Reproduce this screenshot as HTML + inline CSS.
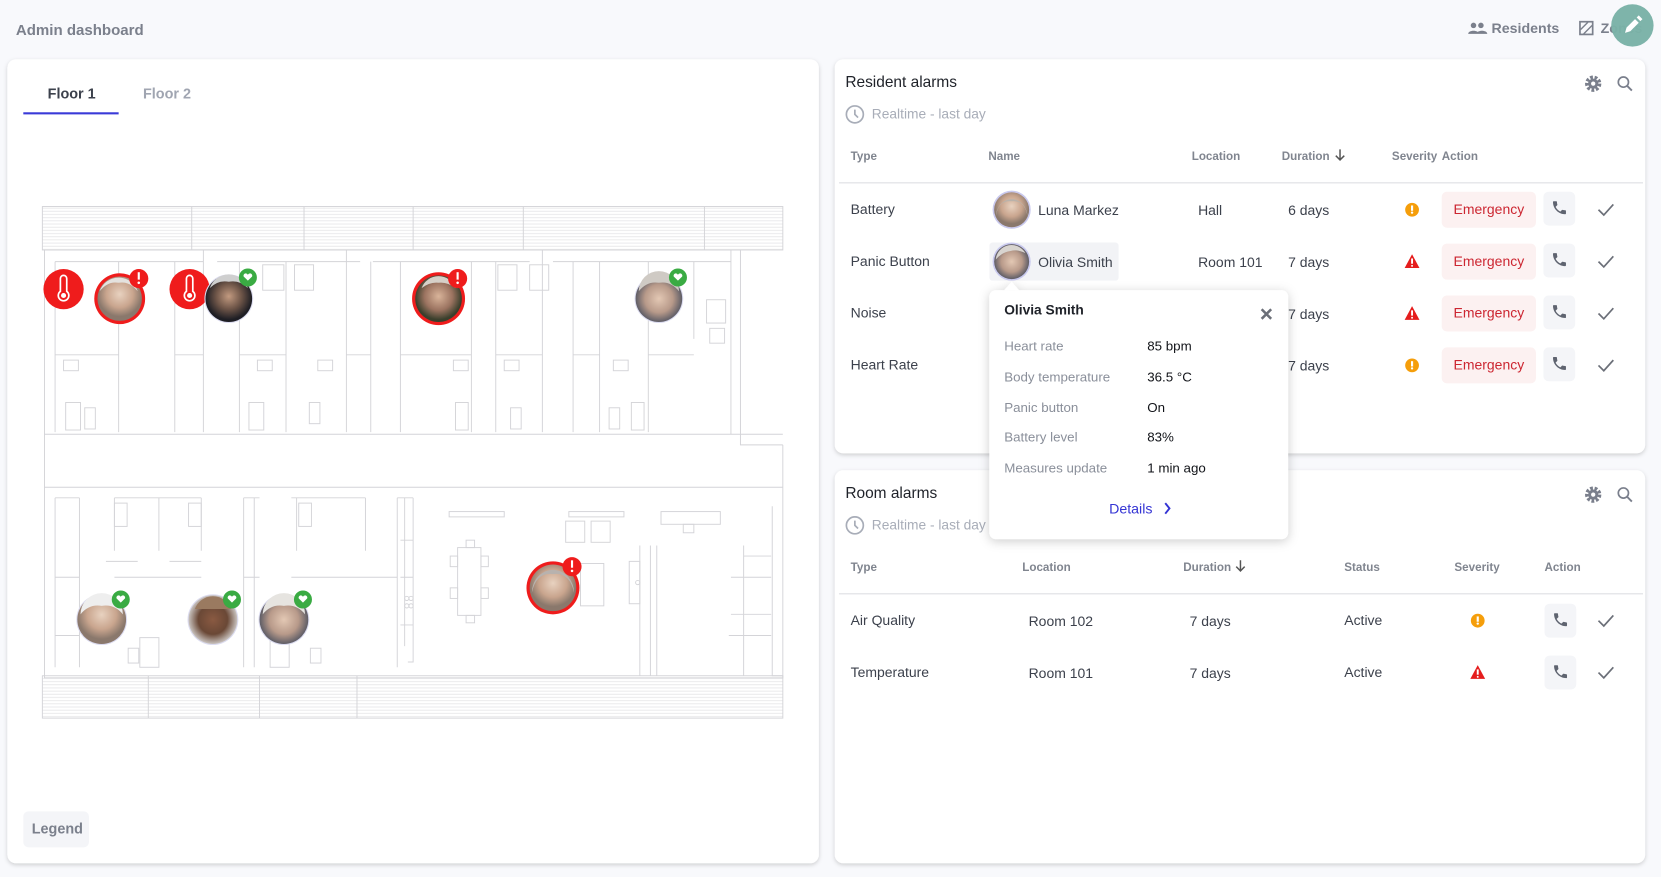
<!DOCTYPE html>
<html><head><meta charset="utf-8">
<style>
html,body{margin:0;padding:0;background:#f8f9fc;overflow:hidden}
svg{display:block}
text{font-family:"Liberation Sans",Arial,sans-serif}
</style></head>
<body>
<svg width="1661" height="877" viewBox="0 0 1568 828" preserveAspectRatio="none" xmlns="http://www.w3.org/2000/svg">
<defs>
<filter id="sh" x="-5%" y="-5%" width="110%" height="110%"><feDropShadow dx="0" dy="1.5" stdDeviation="2" flood-color="#000" flood-opacity="0.18"/></filter>
<filter id="sh2" x="-10%" y="-10%" width="120%" height="125%"><feDropShadow dx="0" dy="2" stdDeviation="5" flood-color="#000" flood-opacity="0.2"/></filter>
<g id="phone"><rect x="-15" y="-16" width="30" height="32" rx="5" fill="#f4f5f8"/><path transform="translate(-8,-9) scale(0.68)" fill="#5f6470" d="M6.62 10.79c1.44 2.83 3.76 5.14 6.590 6.59l2.2-2.2c.27-.27.67-.36 1.02-.24 1.12.37 2.33.57 3.57.57.55 0 1 .45 1 1V20c0 .55-.45 1-1 1-9.39 0-17-7.61-17-17 0-.55.45-1 1-1h3.5c.55 0 1 .45 1 1 0 1.25.2 2.45.57 3.57.11.35.03.74-.25 1.020l-2.2 2.2z"/></g>
<path id="chk" d="M-7 0 L-2 5 L7 -5" fill="none" stroke="#6b6f78" stroke-width="1.6"/>
<g id="warn"><circle r="6.5" fill="#f59e0b"/><rect x="-1" y="-4" width="2" height="5" fill="#fff"/><circle cy="2.8" r="1.1" fill="#fff"/></g>
<g id="tri"><path d="M0 -7 L7 6 L-7 6Z" fill="#e51d1d"/><rect x="-0.9" y="-3" width="1.8" height="5" fill="#fff"/><circle cy="4" r="0.9" fill="#fff"/></g>
<g id="gear"><circle r="6" fill="none" stroke="#7a7f8c" stroke-width="3.4" stroke-dasharray="2.6 1.6"/><circle r="4.8" fill="#7a7f8c"/><circle r="2" fill="#fff"/></g>
<g id="srch"><circle cx="-1.5" cy="-1.5" r="4.8" fill="none" stroke="#7a7f8c" stroke-width="1.6"/><path d="M2 2 L6.5 6.5" stroke="#7a7f8c" stroke-width="1.8"/></g>
<g id="clock"><circle r="8" fill="none" stroke="#a8adb8" stroke-width="1.6"/><path d="M0 -4.5 V0 L3 3" fill="none" stroke="#a8adb8" stroke-width="1.6"/></g>
<pattern id="hatch" width="8" height="3" patternUnits="userSpaceOnUse"><rect width="8" height="3" fill="#fff"/><path d="M0 1.5H8" stroke="#e6e6e8" stroke-width="0.8"/></pattern>
<radialGradient id="f1" cx="50%" cy="40%"><stop offset="0" stop-color="#e8d2c0"/><stop offset="0.6" stop-color="#c9a58e"/><stop offset="1" stop-color="#8a786c"/></radialGradient>
<radialGradient id="f2" cx="50%" cy="45%"><stop offset="0" stop-color="#c29a80"/><stop offset="0.55" stop-color="#6e5548"/><stop offset="1" stop-color="#1e1e24"/></radialGradient>
<radialGradient id="f3" cx="50%" cy="45%"><stop offset="0" stop-color="#d9b49a"/><stop offset="0.6" stop-color="#9b7360"/><stop offset="1" stop-color="#3a3f2c"/></radialGradient>
<radialGradient id="f4" cx="50%" cy="50%"><stop offset="0" stop-color="#e3c8b4"/><stop offset="0.6" stop-color="#b89a8a"/><stop offset="1" stop-color="#5e5d66"/></radialGradient>
<radialGradient id="f5" cx="50%" cy="50%"><stop offset="0" stop-color="#8a5a42"/><stop offset="0.6" stop-color="#6a4836"/><stop offset="1" stop-color="#c8c2be"/></radialGradient>
</defs>

<!-- header -->
<text x="15" y="33" font-size="14.2" font-weight="bold" fill="#7b808c">Admin dashboard</text>
<g fill="#7b808c"><circle cx="1391" cy="24" r="2.6"/><circle cx="1398" cy="24" r="2.6"/><path d="M1386 32c0-4 10-4 10 0zM1394 32c0-4 10-4 10 0z"/></g>
<text x="1408" y="31" font-size="13.4" font-weight="bold" fill="#7b808c">Residents</text>
<rect x="1491.5" y="20.5" width="12" height="12" fill="none" stroke="#7b808c" stroke-width="1.6"/><path d="M1492 28l7-7M1495 32l8-8" stroke="#7b808c" stroke-width="1.3"/>
<text x="1511" y="31" font-size="13.4" font-weight="bold" fill="#7b808c">Zones</text>
<circle cx="1541" cy="24" r="20" fill="#7ab2a7" opacity="0.97"/>
<path d="M1534 31l1.5-5 8-8 3.5 3.5-8 8z M1545 16.5l2-2 3.5 3.5-2 2z" fill="#fff"/>

<!-- left card -->
<rect x="7" y="56" width="766" height="759" rx="8" fill="#fff" filter="url(#sh)"/>
<text x="45" y="93" font-size="13.6" font-weight="bold" fill="#3c414c">Floor 1</text>
<text x="135" y="93" font-size="13.6" font-weight="bold" fill="#a0a5b1">Floor 2</text>
<rect x="22" y="106" width="90" height="2" fill="#3a3ad8"/>
<rect x="22" y="766" width="62" height="34" rx="5" fill="#f4f5f8"/>
<text x="30" y="787" font-size="13.6" font-weight="bold" fill="#7b808c">Legend</text>

<!-- floor plan -->
<g fill="none" stroke="#d4d4d8" stroke-width="0.9">
<rect x="40" y="195" width="699" height="41" fill="url(#hatch)"/>
<rect x="40" y="638" width="699" height="40" fill="url(#hatch)"/>
<path d="M181 195v41M287 195v41M390 195v41M494 195v41M665 195v41M140 638v40M245 638v40M337 638v40"/>
<path d="M42 236H699V420H739M42 236V640H739V420M42 410H739M42 460H739"/>
<path d="M52 247V408M112 247V408M165 247V408M192 236V408M226 247V408M270 247V408M327 236V408M350 247V408M378 247V408M445 247V408M468 247V408M512 236V408M541 247V408M566 247V408M612 247V408M655 247V320M690 236V410"/>
<path d="M52 247H192M205 247H340M352 247H500M522 247H690M52 335H112M165 335H192M226 335H270M327 335H350M378 335H445M468 335H512M541 335H566M612 335H655"/>
<rect x="62" y="380" width="14" height="26"/><rect x="80" y="385" width="10" height="20"/><rect x="235" y="380" width="14" height="26"/><rect x="292" y="380" width="10" height="20"/><rect x="430" y="380" width="12" height="26"/><rect x="482" y="385" width="10" height="20"/><rect x="596" y="380" width="12" height="26"/><rect x="575" y="385" width="10" height="20"/>
<rect x="60" y="340" width="14" height="10"/><rect x="243" y="340" width="14" height="10"/><rect x="300" y="340" width="14" height="10"/><rect x="428" y="340" width="14" height="10"/><rect x="476" y="340" width="14" height="10"/><rect x="579" y="340" width="14" height="10"/>
<rect x="248" y="250" width="20" height="24"/><rect x="278" y="250" width="18" height="24"/><rect x="470" y="250" width="18" height="24"/><rect x="500" y="250" width="18" height="24"/><rect x="667" y="283" width="18" height="22"/><rect x="670" y="310" width="14" height="14"/>
<path d="M52 470V630M75 470V630M108 470V520M150 470V520M190 470V520M230 470V630M240 470V630M280 470V520M345 470V520M375 470V630M390 470V625H385"/>
<path d="M52 470H75M108 470H190M230 470H245M275 470H345M375 470H390M52 545H75M108 545H190M230 545H245M275 545H375M52 600H75M100 530H130M160 530H190"/>
<rect x="108" y="475" width="12" height="22"/><rect x="178" y="475" width="12" height="22"/><rect x="282" y="475" width="12" height="22"/><rect x="132" y="602" width="18" height="28"/><rect x="121" y="612" width="10" height="14"/><rect x="255" y="602" width="18" height="28"/><rect x="293" y="612" width="10" height="14"/>
<path d="M382 470V610M378 510H390M378 545H390M378 590H390"/><circle cx="384" cy="565" r="2"/><circle cx="388" cy="565" r="2"/><circle cx="384" cy="572" r="2"/><circle cx="388" cy="572" r="2"/>
<rect x="424" y="483" width="52" height="5"/><rect x="537" y="483" width="52" height="5"/><rect x="624" y="483" width="56" height="12"/><rect x="645" y="495" width="10" height="8"/>
<rect x="432" y="517" width="22" height="64"/><rect x="440" y="510" width="8" height="7"/><rect x="440" y="581" width="8" height="7"/><rect x="425" y="525" width="7" height="10"/><rect x="454" y="525" width="7" height="10"/><rect x="425" y="555" width="7" height="10"/><rect x="454" y="555" width="7" height="10"/>
<rect x="534" y="492" width="18" height="20"/><rect x="558" y="492" width="18" height="20"/><rect x="548" y="532" width="22" height="40"/>
<path d="M604 515V638M614 515V638M620 515V638M702 515V638M702 525H728M690 545H728M690 580H728M688 600H728"/><rect x="594" y="530" width="10" height="40"/><circle cx="602" cy="550" r="2"/>
<path d="M729 478V638H739"/>
</g>

<!-- plan markers -->
<g>
<circle cx="60" cy="273" r="19" fill="#ef1c1c"/>
<path d="M57 263a3 3 0 0 1 6 0v12a5 5 0 1 1-6 0z" fill="none" stroke="#fff" stroke-width="1.6"/><circle cx="60" cy="279" r="2.4" fill="#fff"/>
<circle cx="179" cy="273" r="19" fill="#ef1c1c"/>
<path d="M176 263a3 3 0 0 1 6 0v12a5 5 0 1 1-6 0z" fill="none" stroke="#fff" stroke-width="1.6"/><circle cx="179" cy="279" r="2.4" fill="#fff"/>

<circle cx="113" cy="282" r="24" fill="#ef1c1c"/><circle cx="113" cy="282" r="21" fill="url(#f1)"/><path d="M94 275a19 19 0 0 1 36 0q-8-10-18-8q-10-2-18 8z" fill="#e4e2de"/>
<circle cx="131" cy="263" r="9" fill="#ef1c1c"/><rect x="130" y="257" width="2" height="7" fill="#fff"/><circle cx="131" cy="267" r="1.2" fill="#fff"/>

<circle cx="216" cy="282" r="23" fill="#dcdcf0"/><circle cx="216" cy="282" r="22" fill="url(#f2)"/><path d="M198 272a19 19 0 0 1 36 0q-8-8-18-6q-10-2-18 6z" fill="#cfcfcf"/>
<circle cx="234" cy="262" r="8.5" fill="#3aab43"/><path d="M230 261a2 2 0 0 1 4-1.5 2 2 0 0 1 4 1.5l-4 4z" fill="#fff"/>

<circle cx="414" cy="282" r="25" fill="#ef1c1c"/><circle cx="414" cy="282" r="22" fill="url(#f3)"/><path d="M398 272a17 17 0 0 1 32 0q-8-6-16-5q-8-1-16 5z" fill="#d6d0c8"/>
<circle cx="432" cy="263" r="9" fill="#ef1c1c"/><rect x="431" y="257" width="2" height="7" fill="#fff"/><circle cx="432" cy="267" r="1.2" fill="#fff"/>

<circle cx="622" cy="282" r="23" fill="#dcdcf0"/><circle cx="622" cy="282" r="22" fill="url(#f4)"/><path d="M603 275a19 19 0 0 1 38 0q-8-10-19-8q-11-2-19 8z" fill="#cfcac4"/>
<circle cx="640" cy="262" r="8.5" fill="#3aab43"/><path d="M636 261a2 2 0 0 1 4-1.5 2 2 0 0 1 4 1.5l-4 4z" fill="#fff"/>

<circle cx="96" cy="585" r="24" fill="#dcdcf0"/><circle cx="96" cy="585" r="23" fill="url(#f1)"/><path d="M76 580a20 20 0 0 1 40 0q-8-10-20-8q-12-2-20 8z" fill="#eeeeee"/>
<circle cx="114" cy="566" r="8.5" fill="#3aab43"/><path d="M110 565a2 2 0 0 1 4-1.5 2 2 0 0 1 4 1.5l-4 4z" fill="#fff"/>

<circle cx="201" cy="585" r="24" fill="#dcdcf0"/><circle cx="201" cy="585" r="23" fill="url(#f5)"/><path d="M184 575a18 18 0 0 1 34 0z" fill="#9a7a60"/>
<circle cx="219" cy="566" r="8.5" fill="#3aab43"/><path d="M215 565a2 2 0 0 1 4-1.5 2 2 0 0 1 4 1.5l-4 4z" fill="#fff"/>

<circle cx="268" cy="585" r="24" fill="#dcdcf0"/><circle cx="268" cy="585" r="23" fill="url(#f4)"/><path d="M248 580a20 20 0 0 1 40 0q-8-10-20-8q-12-2-20 8z" fill="#e6e4e0"/>
<circle cx="286" cy="566" r="8.5" fill="#3aab43"/><path d="M282 565a2 2 0 0 1 4-1.5 2 2 0 0 1 4 1.5l-4 4z" fill="#fff"/>

<circle cx="522" cy="555" r="25" fill="#ef1c1c"/><circle cx="522" cy="555" r="22" fill="url(#f1)"/><path d="M502 560a20 22 0 0 1 40 0q-4-20-20-18q-16-2-20 18z" fill="#b8b2ae"/>
<circle cx="540" cy="535" r="9" fill="#ef1c1c"/><rect x="539" y="529" width="2" height="7" fill="#fff"/><circle cx="540" cy="539" r="1.2" fill="#fff"/>
</g>

<!-- Resident alarms card -->
<rect x="788" y="56" width="765" height="372" rx="8" fill="#fff" filter="url(#sh)"/>
<text x="798" y="82" font-size="14.6" fill="#1f2229">Resident alarms</text>
<use href="#gear" x="1504" y="79"/><use href="#srch" x="1534" y="79"/>
<use href="#clock" x="807" y="108"/><text x="823" y="112" font-size="13" fill="#a8adb8">Realtime - last day</text>
<g font-size="11" font-weight="bold" fill="#80858f">
<text x="803" y="151">Type</text><text x="933" y="151">Name</text><text x="1125" y="151">Location</text><text x="1210" y="151">Duration</text><text x="1314" y="151">Severity</text><text x="1361" y="151">Action</text></g>
<path d="M1265 141v10M1261 147l4 4 4-4" fill="none" stroke="#555" stroke-width="1.4"/>
<rect x="792" y="172" width="759" height="1.2" fill="#e2e3e7"/>
<g font-size="13.2" fill="#3c414c">
<text x="803" y="202">Battery</text><text x="803" y="251">Panic Button</text><text x="803" y="300">Noise</text><text x="803" y="349">Heart Rate</text>
<text x="980" y="203">Luna Markez</text>
<text x="1131" y="203">Hall</text><text x="1131" y="252">Room 101</text>
<text x="1216" y="203">6 days</text><text x="1216" y="252">7 days</text><text x="1216" y="301">7 days</text><text x="1216" y="350">7 days</text>
</g>
<rect x="934" y="229" width="122" height="36" rx="3" fill="#f2f3f6"/>
<text x="980" y="252" font-size="13.2" fill="#3c414c">Olivia Smith</text>
<circle cx="955" cy="198" r="18" fill="#c9c9ee"/><circle cx="955" cy="198" r="16.5" fill="url(#f1)"/><path d="M940 205a15 17 0 0 1 30 0q-2-16-15-15q-13-1-15 15z" fill="#bab2aa"/>
<circle cx="955" cy="247" r="18" fill="#c9c9ee"/><circle cx="955" cy="247" r="16.5" fill="url(#f4)"/><path d="M940 245a15 15 0 0 1 28-6q-8-4-14-2q-8 1-14 8z" fill="#d8d4cf"/>
<use href="#warn" x="1333" y="198"/><use href="#tri" x="1333" y="247"/><use href="#tri" x="1333" y="296"/><use href="#warn" x="1333" y="345"/>
<g font-size="13.2" fill="#cc2631">
<rect x="1361" y="181" width="89" height="34" rx="5" fill="#fcf1f1"/><text x="1405.5" y="202" text-anchor="middle">Emergency</text>
<rect x="1361" y="230" width="89" height="34" rx="5" fill="#fcf1f1"/><text x="1405.5" y="251" text-anchor="middle">Emergency</text>
<rect x="1361" y="279" width="89" height="34" rx="5" fill="#fcf1f1"/><text x="1405.5" y="300" text-anchor="middle">Emergency</text>
<rect x="1361" y="328" width="89" height="34" rx="5" fill="#fcf1f1"/><text x="1405.5" y="349" text-anchor="middle">Emergency</text>
</g>
<use href="#phone" x="1472" y="197"/><use href="#phone" x="1472" y="246"/><use href="#phone" x="1472" y="295"/><use href="#phone" x="1472" y="344"/>
<use href="#chk" x="1516" y="198"/><use href="#chk" x="1516" y="247"/><use href="#chk" x="1516" y="296"/><use href="#chk" x="1516" y="345"/>

<!-- Room alarms card -->
<rect x="788" y="444" width="765" height="371" rx="8" fill="#fff" filter="url(#sh)"/>
<text x="798" y="470" font-size="14.6" fill="#1f2229">Room alarms</text>
<use href="#gear" x="1504" y="467"/><use href="#srch" x="1534" y="467"/>
<use href="#clock" x="807" y="496"/><text x="823" y="500" font-size="13" fill="#a8adb8">Realtime - last day</text>
<g font-size="11" font-weight="bold" fill="#80858f">
<text x="803" y="539">Type</text><text x="965" y="539">Location</text><text x="1117" y="539">Duration</text><text x="1269" y="539">Status</text><text x="1373" y="539">Severity</text><text x="1458" y="539">Action</text></g>
<path d="M1171 529v10M1167 535l4 4 4-4" fill="none" stroke="#555" stroke-width="1.4"/>
<rect x="792" y="560" width="759" height="1.2" fill="#e2e3e7"/>
<g font-size="13.2" fill="#3c414c">
<text x="803" y="590">Air Quality</text><text x="803" y="639">Temperature</text>
<text x="971" y="591">Room 102</text><text x="971" y="640">Room 101</text>
<text x="1123" y="591">7 days</text><text x="1123" y="640">7 days</text>
<text x="1269" y="590">Active</text><text x="1269" y="639">Active</text>
</g>
<use href="#warn" x="1395" y="586"/><use href="#tri" x="1395" y="635"/>
<use href="#phone" x="1473" y="586"/><use href="#phone" x="1473" y="635"/>
<use href="#chk" x="1516" y="586"/><use href="#chk" x="1516" y="635"/>

<!-- popup -->
<g filter="url(#sh2)">
<rect x="934" y="274" width="282" height="235" rx="6" fill="#fff"/>
<path d="M948 274l7-8 7 8z" fill="#fff"/>
</g>
<text x="948" y="297" font-size="13" font-weight="bold" fill="#1f2229">Olivia Smith</text>
<path d="M1191 292l9 9M1200 292l-9 9" stroke="#6b6f78" stroke-width="2.4"/>
<g font-size="12.6" fill="#8a8f9a">
<text x="948" y="331">Heart rate</text><text x="948" y="360">Body temperature</text><text x="948" y="389">Panic button</text><text x="948" y="417">Battery level</text><text x="948" y="446">Measures update</text></g>
<g font-size="12.6" fill="#111318">
<text x="1083" y="331">85 bpm</text><text x="1083" y="360">36.5 °C</text><text x="1083" y="389">On</text><text x="1083" y="417">83%</text><text x="1083" y="446">1 min ago</text></g>
<text x="1047" y="485" font-size="13.4" fill="#3434d4">Details</text>
<path d="M1100 475l4 5-4 5" fill="none" stroke="#3434d4" stroke-width="1.8"/>
</svg>
</body></html>
